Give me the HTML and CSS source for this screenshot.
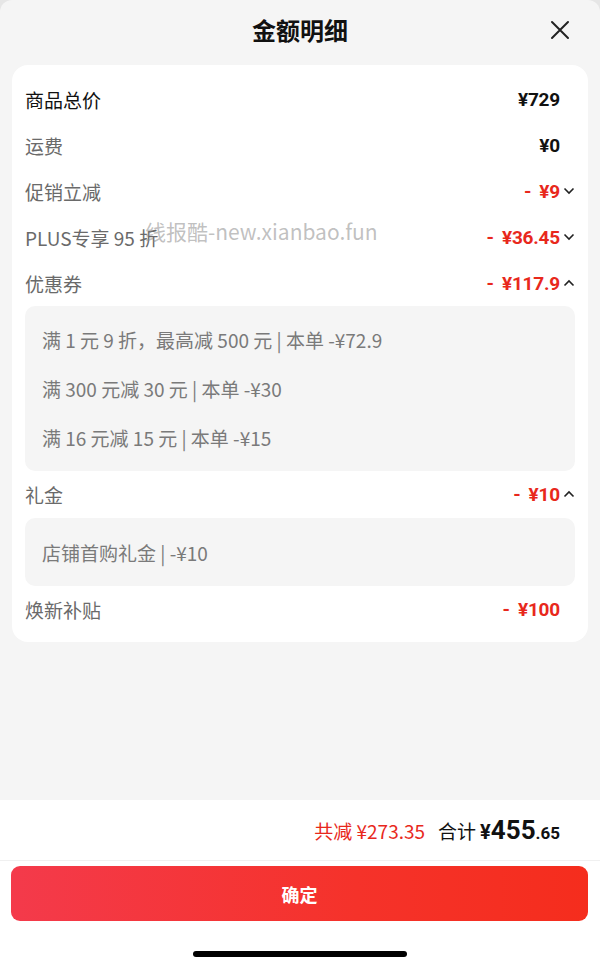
FILE: index.html
```html
<!DOCTYPE html>
<html lang="zh-CN">
<head>
<meta charset="utf-8">
<title>金额明细</title>
<link rel="stylesheet" href="styles.css">
</head>
<body>
<div class="sheet">
  <header class="header">
    <h1 class="title">金额明细</h1>
    <svg class="close" width="20" height="20" viewBox="0 0 20 20"><path d="M2 2 L18 18 M18 2 L2 18" stroke="#222" stroke-width="2" fill="none" stroke-linecap="round"/></svg>
  </header>

  <section class="card">
    <div class="row">
      <span class="label dark">商品总价</span>
      <span class="amount">¥729</span>
    </div>
    <div class="row">
      <span class="label">运费</span>
      <span class="amount">¥0</span>
    </div>
    <div class="row">
      <span class="label">促销立减</span>
      <span class="amount red"><span class="minus">-</span>¥9<svg class="chev" viewBox="0 0 12 8"><path d="M1.5 1.5 L6 6 L10.5 1.5" stroke="#222" stroke-width="1.6" fill="none"/></svg></span>
    </div>
    <div class="row">
      <span class="label">PLUS专享 95 折</span>
      <span class="amount red"><span class="minus">-</span>¥36.45<svg class="chev" viewBox="0 0 12 8"><path d="M1.5 1.5 L6 6 L10.5 1.5" stroke="#222" stroke-width="1.6" fill="none"/></svg></span>
    </div>
    <div class="row">
      <span class="label">优惠券</span>
      <span class="amount red"><span class="minus">-</span>¥117.9<svg class="chev" viewBox="0 0 12 8"><path d="M1.5 6.5 L6 2 L10.5 6.5" stroke="#222" stroke-width="1.6" fill="none"/></svg></span>
    </div>
    <div class="detail">
      <div class="detail-line">满 1 元 9 折，最高减 500 元 | 本单 -¥72.9</div>
      <div class="detail-line">满 300 元减 30 元 | 本单 -¥30</div>
      <div class="detail-line">满 16 元减 15 元 | 本单 -¥15</div>
    </div>
    <div class="row">
      <span class="label">礼金</span>
      <span class="amount red"><span class="minus">-</span>¥10<svg class="chev" viewBox="0 0 12 8"><path d="M1.5 6.5 L6 2 L10.5 6.5" stroke="#222" stroke-width="1.6" fill="none"/></svg></span>
    </div>
    <div class="detail detail-single">
      <div class="detail-line">店铺首购礼金 | -¥10</div>
    </div>
    <div class="row">
      <span class="label">焕新补贴</span>
      <span class="amount red"><span class="minus">-</span>¥100</span>
    </div>
    <div class="watermark">线报酷-new.xianbao.fun</div>
  </section>

  <div class="spacer"></div>

  <footer class="footer">
    <div class="summary">
      <span class="saved">共减 ¥273.35</span>
      <span class="total-label">合计</span>
      <span class="total"><span class="yen">¥</span><span class="int">455</span><span class="dec">.65</span></span>
    </div>
    <button class="confirm">确定</button>
    <div class="home-bar"></div>
  </footer>
</div>
</body>
</html>
```

FILE: styles.css
```css
* { box-sizing: border-box; }
html, body {
  margin: 0;
  padding: 0;
  background: #e6e6e6;
}
body {
  font-family: "Noto Sans CJK SC", "Noto Sans", sans-serif;
  width: 600px;
  height: 970px;
  overflow: hidden;
}
.sheet {
  width: 600px;
  height: 970px;
  background: #f5f5f5;
  border-radius: 12px 12px 0 0;
  display: flex;
  flex-direction: column;
}
.header {
  position: relative;
  height: 60px;
  display: flex;
  align-items: center;
  justify-content: center;
}
.title {
  margin: 0;
  font-size: 24px;
  font-weight: 700;
  color: #111;
  line-height: 1;
}
.close {
  position: absolute;
  right: 30px;
  top: 20px;
}
.card {
  position: relative;
  margin: 5px 12px 0;
  background: #fff;
  border-radius: 16px;
  padding: 11px 13px 10px;
}
.row {
  height: 46px;
  display: flex;
  align-items: center;
  justify-content: space-between;
}
.label {
  font-size: 19px;
  color: #6a6a6a;
  line-height: 1;
}
.label.dark { color: #111; }
.amount {
  font-family: "Roboto", "Noto Sans CJK SC", sans-serif;
  font-size: 19px;
  font-weight: 700;
  color: #111;
  display: flex;
  align-items: center;
  padding-right: 15px;
  position: relative;
  letter-spacing: -0.2px;
}
.amount.red { color: #e8281c; }
.minus {
  margin-right: 8px;
}
.chev {
  position: absolute;
  right: 0;
  top: 50%;
  width: 12px;
  height: 8px;
  margin-top: -4px;
}
.detail {
  background: #f5f5f5;
  border-radius: 10px;
  padding: 9px 17px 9px;
}
.detail-single {
  padding: 10px 17px 9px;
  margin-top: 1px;
}
.detail-line {
  height: 49px;
  display: flex;
  align-items: center;
  font-size: 19px;
  color: #7a7a7a;
  white-space: pre;
}
.watermark {
  position: absolute;
  left: 133px;
  top: 151px;
  font-family: "Noto Sans CJK SC", "Noto Sans", sans-serif;
  font-size: 21px;
  color: rgba(140, 140, 140, 0.55);
  pointer-events: none;
}
.spacer { flex: 1; }
.footer {
  height: 170px;
  background: #fff;
  display: flex;
  flex-direction: column;
}
.summary {
  height: 61px;
  border-bottom: 1px solid #f0f0f0;
  display: flex;
  align-items: center;
  justify-content: flex-end;
  padding-right: 40px;
}
.saved {
  font-size: 19px;
  color: #e8281c;
  margin-right: 13px;
}
.total-label {
  font-size: 19px;
  color: #111;
  margin-right: 4px;
}
.total {
  font-family: "Roboto", "Noto Sans", sans-serif;
  font-weight: 700;
  color: #111;
  display: flex;
  align-items: baseline;
}
.yen { font-size: 20px; }
.int { font-size: 26px; }
.dec { font-size: 17px; }
.confirm {
  margin: 5px 12px 0 11px;
  height: 55px;
  border: none;
  border-radius: 9px;
  background: linear-gradient(90deg, #f43a4b 0%, #f5322a 60%, #f52d1d 100%);
  color: #fff;
  font-family: "Noto Sans CJK SC", sans-serif;
  font-size: 18px;
  font-weight: 700;
}
.home-bar {
  width: 214px;
  height: 6px;
  background: #000;
  border-radius: 3px;
  margin: 30px auto 0;
}
```
